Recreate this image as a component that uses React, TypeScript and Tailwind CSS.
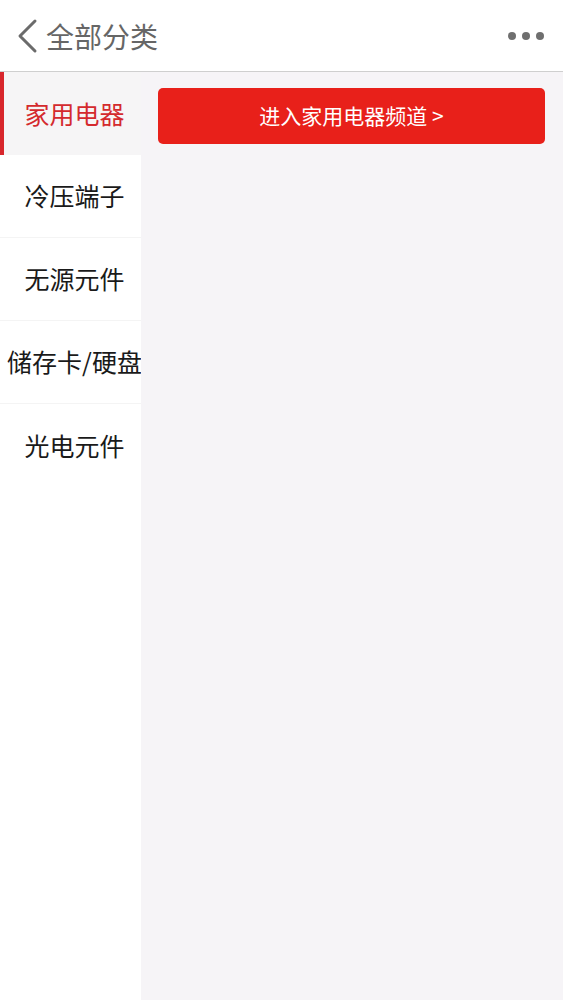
import React from "react";

const items = ["家用电器", "冷压端子", "无源元件", "储存卡/硬盘", "光电元件"];

export default function App() {
  return (
    <div
      className="w-[563px] h-[1000px] flex flex-col bg-white overflow-hidden"
      style={{ fontFamily: '"Noto Sans CJK SC", "Noto Sans", sans-serif' }}
    >
      <div className="h-[72px] shrink-0 flex items-center border-b border-[#cfcfcf] bg-white">
        <svg width="22" height="36" viewBox="0 0 22 36" className="ml-[16px]">
          <path d="M19 3 L4 18 L19 33" fill="none" stroke="#6b6b6b" strokeWidth="3" strokeLinecap="round" strokeLinejoin="round" />
        </svg>
        <div className="ml-[8px] text-[28px] leading-none text-[#666666]">全部分类</div>
        <div className="ml-auto mr-[19px] flex gap-[6px]">
          <span className="w-[8px] h-[8px] rounded-full bg-[#6f6f6f]" />
          <span className="w-[8px] h-[8px] rounded-full bg-[#6f6f6f]" />
          <span className="w-[8px] h-[8px] rounded-full bg-[#6f6f6f]" />
        </div>
      </div>
      <div className="flex flex-1">
        <div className="w-[141px] shrink-0 bg-white flex flex-col">
          {items.map((t, i) =>
            i === 0 ? (
              <div
                key={t}
                className="h-[83px] flex items-center justify-center bg-[#f6f5f6] border-l-[4px] border-[#d8262c] text-[#d42a2e] text-[25px] pl-[4px]"
              >
                {t}
              </div>
            ) : (
              <div
                key={t}
                className={`h-[83px] flex items-center justify-center pl-[8px] text-[#1a1a1a] text-[25px] whitespace-nowrap ${i < items.length - 1 ? "border-b border-[#f4f4f4]" : ""}`}
              >
                {t}
              </div>
            )
          )}
        </div>
        <div className="flex-1 bg-[#f6f4f7] pt-[16px] pl-[17px] pr-[18px]">
          <div className="h-[56px] rounded-[5px] bg-[#e8201a] flex items-center justify-center text-white text-[21px]">
            进入家用电器频道 &gt;
          </div>
        </div>
      </div>
    </div>
  );
}
